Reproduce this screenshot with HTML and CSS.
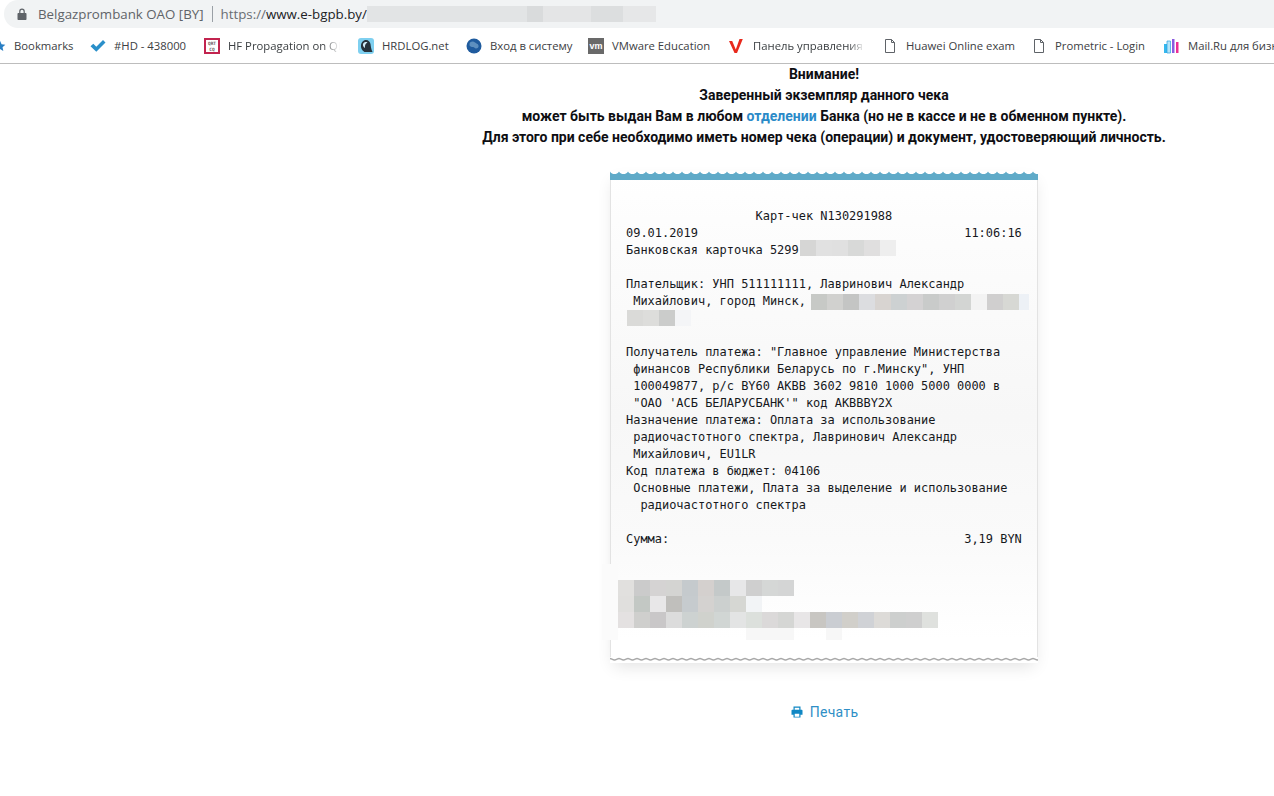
FILE: index.html
```html
<!DOCTYPE html>
<html lang="ru">
<head>
<meta charset="utf-8">
<title>Карт-чек</title>
<link rel="stylesheet" href="styles.css">
</head>
<body>
<header class="chrome">
  <div class="toolbar">
    <div class="omnibox">
      <svg class="lock" width="10" height="12" viewBox="0 0 10 12"><path d="M2.2 5V3.4a2.8 2.8 0 0 1 5.6 0V5h.7c.6 0 1 .4 1 1v4.9c0 .6-.4 1-1 1h-7c-.6 0-1-.4-1-1V6c0-.6.4-1 1-1zm1.2 0h3.2V3.4a1.6 1.6 0 0 0-3.2 0z" fill="#5f6368"/></svg>
      <span class="site">Belgazprombank OAO [BY]</span>
      <span class="sep"></span>
      <span class="url"><span class="url-dim">https://</span>www.e-bgpb.by/</span>
      <span class="url-blur"></span>
    </div>
  </div>
  <nav class="bookmarks">
    <a class="bm">
      <svg class="ic" viewBox="0 0 16 16"><path d="M8 1l2.1 4.6 5 .6-3.7 3.4 1 4.9L8 12.100l-4.400 2.400 1-4.900L.9 6.200l5-.6z" fill="#2a7fc4"/></svg>
      <span>Bookmarks</span>
    </a>
    <a class="bm">
      <svg class="ic" viewBox="0 0 16 16"><path d="M0.500 8.200l2.800-2.500 3 3L13 2l2.500 2.400-9.200 9.400z" fill="#2a8fc9"/></svg>
      <span>#HD - 438000</span>
    </a>
    <a class="bm">
      <svg class="ic" viewBox="0 0 16 16"><rect x="1" y="1" width="14" height="14" fill="#fff" stroke="#c2244f" stroke-width="2"/><text class="qrz" x="8" y="7">QRT</text><text class="qrz" x="8" y="12.500">CQ</text></svg>
      <span class="fade fade-hf">HF Propagation on QRZ</span>
    </a>
    <a class="bm">
      <svg class="ic" viewBox="0 0 16 16"><rect width="16" height="16" rx="3" fill="#7fd0f0"/><path d="M6 2.500c3-1.500 6 .5 6.500 3.500.4 2.500.5 5 2 8H6.500C4 12.500 2.500 9.500 3 7c.3-2 1.500-3.700 3-4.500z" fill="#27323c"/><path d="M5 6c1-2 3-2.500 4.500-1.500C8 5 6.500 7 7 10 5.500 9 4.500 7.500 5 6z" fill="#cfe9f5"/></svg>
      <span>HRDLOG.net</span>
    </a>
    <a class="bm">
      <svg class="ic" viewBox="0 0 16 16"><circle cx="8" cy="8" r="7.500" fill="#1f5b9e"/><path d="M4 4.500c2-1.500 4-1 5 0s3 1 3.500 3-1 3-2.500 3-1.500-1.500-3-1.500-3.500-.5-3.500-2 .1-1.900.500-2.500z" fill="#5d8fbf"/></svg>
      <span>Вход в систему</span>
    </a>
    <a class="bm">
      <svg class="ic" viewBox="0 0 16 16"><rect width="16" height="16" fill="#696969"/><text class="vm" x="8" y="10.500">vm</text></svg>
      <span>VMware Education</span>
    </a>
    <a class="bm">
      <svg class="ic" viewBox="0 0 16 16"><path d="M0 3h3.200l3.600 8.500L10.500 1h3.300L8 15H5.500z" fill="#e8291c"/></svg>
      <span class="fade fade-panel">Панель управления VPS</span>
    </a>
    <a class="bm">
      <svg class="ic" viewBox="0 0 16 16"><path d="M3.500 1.500h6l3 3v10h-9zM9.500 1.500v3h3" fill="#fff" stroke="#5f6368"/></svg>
      <span>Huawei Online exam</span>
    </a>
    <a class="bm">
      <svg class="ic" viewBox="0 0 16 16"><path d="M3.500 1.500h6l3 3v10h-9zM9.500 1.500v3h3" fill="#fff" stroke="#5f6368"/></svg>
      <span>Prometric - Login</span>
    </a>
    <a class="bm">
      <svg class="ic" viewBox="0 0 16 16"><path d="M0 6h3v9H0z" fill="#35b8ee"/><path d="M3 3h3.500v12H3z" fill="#b5e4f8" stroke="#2b9fe0" stroke-width=".7"/><path d="M8 1h2.500v14H8z" fill="#8a5be0"/><path d="M12 4h2.500v11H12z" fill="#ec2e93"/></svg>
      <span>Mail.Ru для бизнеса</span>
    </a>
  </nav>
</header>

<main class="page">
  <div class="notice">
    <strong>Внимание!</strong>
    <strong>Заверенный экземпляр данного чека</strong>
    <strong>может быть выдан Вам в любом <a class="notice-link">отделении</a> Банка (но не в кассе и не в обменном пункте).</strong>
    <strong>Для этого при себе необходимо иметь номер чека (операции) и документ, удостоверяющий личность.</strong>
  </div>

  <article class="receipt">
    <svg class="wave-top" width="428" height="9" viewBox="0 0 428 9">
      <defs>
        <pattern id="waveTop" width="9" height="9" patternUnits="userSpaceOnUse">
          <path d="M0 0.500C1 2.500 3 3 4.500 3S8 2.500 9 0.500V9H0z" fill="#5faac8"/>
        </pattern>
      </defs>
      <rect width="428" height="9" fill="url(#waveTop)"/>
    </svg>
    <div class="receipt-body">
<pre class="receipt-text">                  Карт-чек N130291988
09.01.2019                                     11:06:16
Банковская карточка 5299<span class="blur blur-card"></span>

Плательщик: УНП 511111111, Лавринович Александр
 Михайлович, город Минск,<span class="blur blur-addr"></span>
<span class="blur blur-addr2"></span>

Получатель платежа: "Главное управление Министерства
 финансов Республики Беларусь по г.Минску", УНП
 100049877, р/с BY60 AKBB 3602 9810 1000 5000 0000 в
 "ОАО 'АСБ БЕЛАРУСБАНК'" код AKBBBY2X
Назначение платежа: Оплата за использование
 радиочастотного спектра, Лавринович Александр
 Михайлович, EU1LR
Код платежа в бюджет: 04106
 Основные платежи, Плата за выделение и использование
  радиочастотного спектра

Сумма:                                         3,19 BYN</pre>
    </div>
    <div class="stamp-blur">
      <div class="stamp-row stamp-1"></div>
      <div class="stamp-row stamp-2"></div>
      <div class="stamp-row stamp-3"></div>
      <div class="stamp-row stamp-4"></div>
    </div>
    <svg class="wave-bottom" width="428" height="6" viewBox="0 0 428 6">
      <defs>
        <pattern id="waveBottom" width="9" height="6" patternUnits="userSpaceOnUse">
          <path d="M0 1.500C1.500 1.500 2.500 3 4.500 3S7.500 1.500 9 1.500" fill="none" stroke="#a9a9a9" stroke-width="1.300"/>
        </pattern>
      </defs>
      <rect width="428" height="6" fill="url(#waveBottom)"/>
    </svg>
  </article>

  <a class="print">
    <svg class="print-ic" width="12" height="12" viewBox="0 0 12 12"><path d="M2.500.500h7v3.200h1c.6 0 1 .4 1 1v4h-2v2.800h-7V8.700H.5v-4c0-.6.4-1 1-1h1zm1.200 1.200v2h4.600v-2zm0 6v3h4.600v-3z" fill="#0f87c4" fill-rule="evenodd"/></svg>
    <span>Печать</span>
  </a>
</main>
</body>
</html>
```

FILE: styles.css
```css
* {
  box-sizing: border-box;
}

html,
body {
  margin: 0;
  padding: 0;
  height: 100%;
  background: #fff;
  overflow: hidden;
}

body {
  font-family: Roboto, "Liberation Sans", sans-serif;
  color: #111;
}

/* Browser chrome */
.chrome {
  height: 64px;
  border-bottom: 1px solid #bdbdbd;
  font-family: "Open Sans", "Noto Sans", sans-serif;
}

.toolbar {
  height: 28px;
  padding-left: 4px;
}

.omnibox {
  display: flex;
  align-items: center;
  height: 28px;
  padding-left: 13px;
  background: #f1f3f4;
  border-radius: 14px 0 0 14px;
  font-size: 13.3px;
  color: #5f6368;
}

.lock {
  flex: none;
  margin-right: 11px;
}

.site {
  white-space: nowrap;
}

.sep {
  width: 1px;
  height: 16px;
  margin: 0 8px;
  background: #9aa0a6;
}

.url {
  color: #202124;
  white-space: nowrap;
}

.url-dim {
  color: #6a6e73;
}

.url-blur {
  width: 289px;
  height: 16px;
  background: linear-gradient(90deg, #e2e4e5 0 160px, #d9dbdc 160px 176px, #e4e5e6 176px 224px, #dcdedf 224px 256px, #e6e7e8 256px 289px);
}

.bookmarks {
  display: grid;
  grid-template-columns: 96px 114px 154px 108px 122px 141px 153px 149px 133px 1fr;
  align-items: center;
  height: 35px;
  margin-left: -6px;
  font-size: 11.3px;
  color: #3c4043;
  overflow: hidden;
}

.bm {
  display: flex;
  align-items: center;
  gap: 8px;
  white-space: nowrap;
  overflow: hidden;
}

.ic {
  flex: none;
  width: 16px;
  height: 16px;
}

.bm:first-child .ic {
  width: 12px;
  height: 12px;
}

.fade {
  overflow: hidden;
  -webkit-mask-image: linear-gradient(90deg, #000 85%, transparent 100%);
  mask-image: linear-gradient(90deg, #000 85%, transparent 100%);
}

.fade-hf {
  width: 112px;
}

.fade-panel {
  width: 112px;
}

.qrz {
  font-family: "DejaVu Sans Mono", monospace;
  font-size: 4.500px;
  font-weight: 700;
  text-anchor: middle;
  fill: #6b5a60;
}

.vm {
  font-family: "Liberation Sans", sans-serif;
  font-size: 9px;
  font-weight: 700;
  text-anchor: middle;
  fill: #fff;
}

/* Page */
.page {
  display: flex;
  flex-direction: column;
  align-items: center;
  margin-left: 374px;
}

.notice {
  display: flex;
  flex-direction: column;
  align-items: center;
  font-size: 14px;
  line-height: 21px;
  color: #0e0e12;
  white-space: nowrap;
}

.notice strong {
  font-weight: 700;
}

.notice-link {
  color: #2a8ac8;
}

.receipt {
  position: relative;
  width: 428px;
  margin-top: 23px;
  background: linear-gradient(180deg, #fff 0, #fcfcfc 15%, #f7f7f7 50%, #fafafa 75%, #fff 95%);
  box-shadow: 0 7px 16px -4px rgba(0, 0, 0, 0.12);
}

.wave-top,
.wave-bottom {
  display: block;
}

.wave-top {
  background: #fff;
}

.wave-bottom {
  background: #fff;
}

.receipt-body {
  height: 477px;
  padding: 28px 15px 0;
  border-left: 1px solid #e3e3e3;
  border-right: 1px solid #e3e3e3;
}

.receipt-text {
  margin: 0;
  font-family: "DejaVu Sans Mono", "Liberation Mono", monospace;
  font-size: 11.96px;
  line-height: 17px;
  color: #16181c;
}

.blur {
  display: inline-block;
  height: 16px;
  vertical-align: top;
}

.blur-card {
  width: 96px;
  margin: -2px 0 0 1px;
  background: linear-gradient(90deg, #d6d6d5 0 16px, #e1e1e1 16px 32px, #e0e0e0 32px 48px, #d8d9d8 48px 64px, #e0dfdf 64px 80px, #eeeeee 80px 96px);
}

.blur-addr {
  width: 218px;
  margin: 1px 0 0 5px;
  background: linear-gradient(90deg, #c7c9c6 0 16px, #d1d1cf 16px 32px, #c4c5c4 32px 48px, #dcdde0 48px 64px, #d8d4d1 64px 80px, #cdd1d2 80px 96px, #d4d2d3 96px 112px, #c9cbca 112px 128px, #d0d0d0 128px 144px, #d3d5d3 144px 160px, #f3f3f3 160px 176px, #d0cfcf 176px 192px, #d7d8d4 192px 208px, #edf1f6 208px 218px);
}

.blur-addr2 {
  width: 64px;
  margin-left: 1px;
  background: linear-gradient(90deg, #dadad8 0 16px, #dddddb 16px 32px, #cbcccb 32px 48px, #f4f5f7 48px 64px);
}

/* Blurred stamp: sits over the receipt's edge */
.stamp-blur {
  position: absolute;
  left: -8px;
  top: 393px;
  width: 360px;
  height: 76px;
  padding: 16px 0 0 16px;
  background: linear-gradient(90deg, #fbfbfb 0 16px, transparent 16px);
}

.stamp-row {
  height: 16px;
}

.stamp-1 {
  width: 176px;
  background: linear-gradient(90deg, #e1e0de 0 16px, #cbcbcb 16px 32px, #d5d3d3 32px 48px, #d4d4d2 48px 64px, #c5cacd 64px 80px, #d4d0ce 80px 96px, #c4c9c9 96px 112px, #e7e7e8 112px 128px, #cfcfcf 128px 144px, #d5d7d6 144px 160px, #d4d5d5 160px 176px);
}

.stamp-2 {
  width: 144px;
  background: linear-gradient(90deg, #e0dfdd 0 16px, #c3c8c4 16px 32px, #e8e7e8 32px 48px, #c0bfbc 48px 64px, #c6cbce 64px 80px, #d4d2d0 80px 96px, #ccd0cf 96px 112px, #d6d7d3 112px 128px, #f2f4f6 128px 144px);
}

.stamp-3 {
  width: 320px;
  background: linear-gradient(90deg, #e4e1e1 0 16px, #cfcfcd 16px 32px, #c9c7c8 32px 48px, #dcdcdc 48px 64px, #cdd2d1 64px 80px, #d0d2cd 80px 96px, #d1d6d4 96px 112px, #e3e4e4 112px 128px, #dce0dc 128px 144px, #dbd9d9 144px 160px, #d5d6d4 160px 176px, #e8e6e7 176px 192px, #c8c6c2 192px 208px, #cacdd2 208px 224px, #d1cfca 224px 240px, #d0d2d6 240px 256px, #dddbd8 256px 272px, #cdcfce 272px 288px, #cfcfcf 288px 304px, #dfe1de 304px 320px);
}

.stamp-4 {
  width: 224px;
  height: 12px;
  background: linear-gradient(90deg, transparent 0 128px, #f7f7f7 128px 176px, transparent 176px 208px, #f7f7f7 208px 224px);
}

.print {
  display: flex;
  align-items: center;
  gap: 7px;
  margin: 40px 0 0 1px;
  font-size: 14px;
  line-height: 18px;
  letter-spacing: 0.3px;
  color: #2f8fc6;
}

.print-ic {
  flex: none;
}
```
